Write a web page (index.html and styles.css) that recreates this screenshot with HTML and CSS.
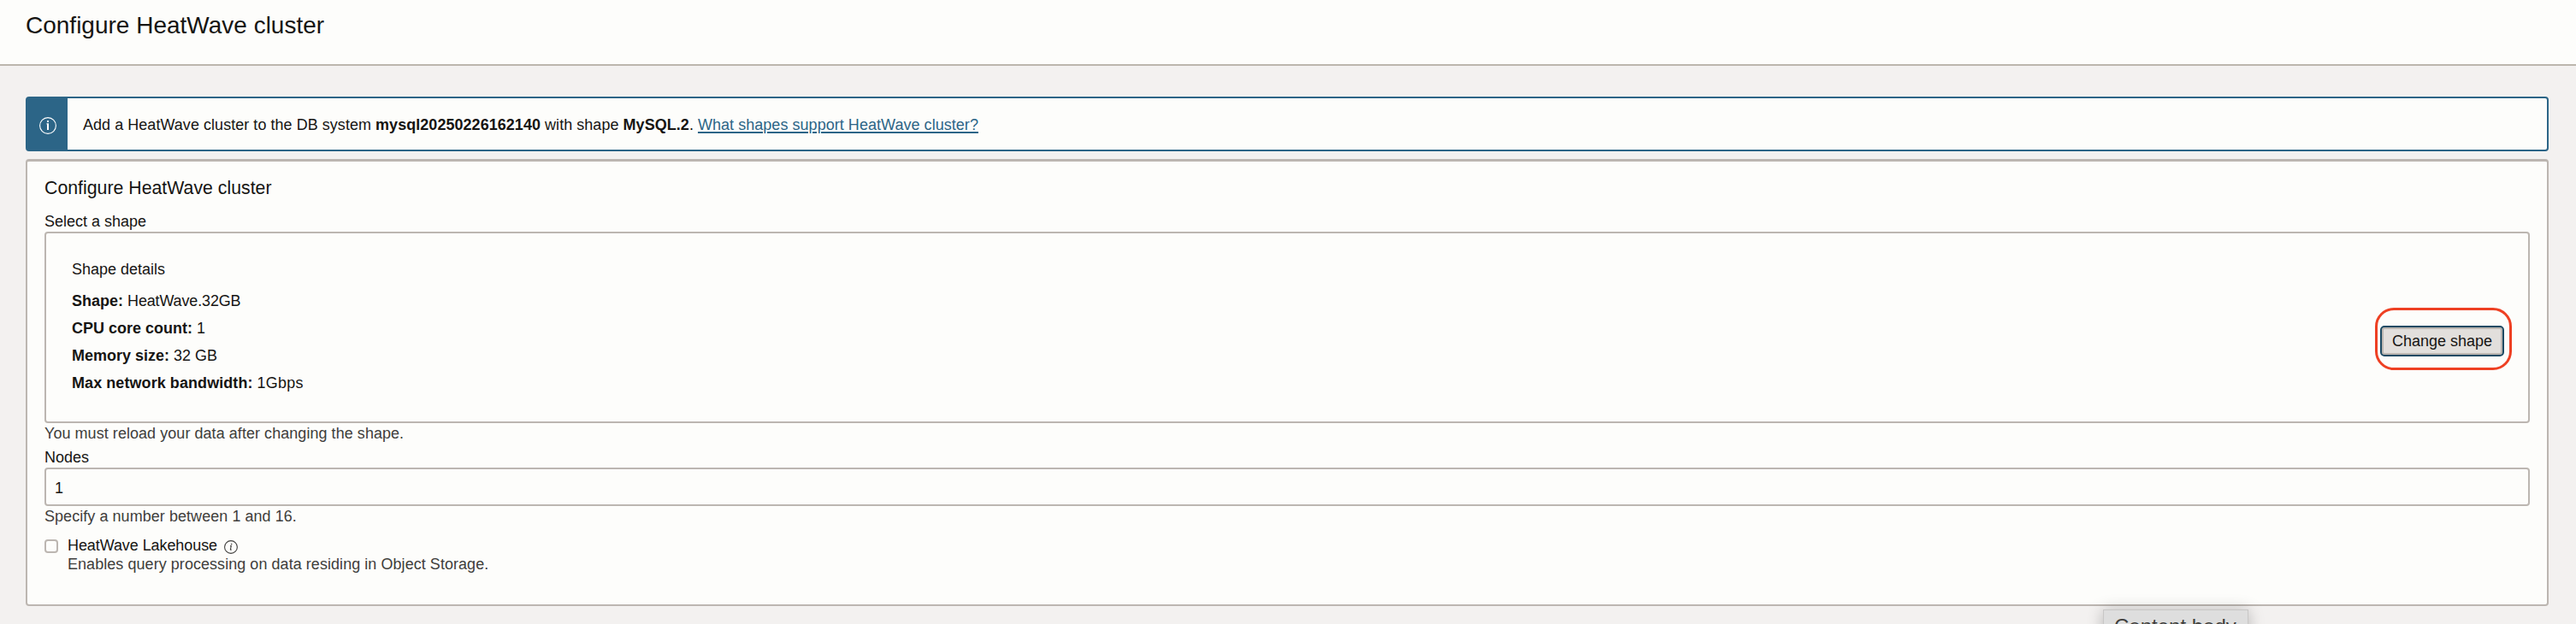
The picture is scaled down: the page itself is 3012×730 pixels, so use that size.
FILE: index.html
```
<!DOCTYPE html>
<html lang="en">
<head>
<meta charset="utf-8">
<title>Configure HeatWave cluster</title>
<link rel="stylesheet" href="styles.css">
</head>
<body>
<header class="header"><h1 class="title">Configure HeatWave cluster</h1></header>
<main class="main">
  <section class="notice">
    <div class="notice-band">
      <svg class="notice-icon" viewBox="0 0 20 20"><circle cx="10" cy="10" r="9.4"/><path d="M9 4H11V6H9ZM8.5 7.3H11V15H9V8.5H8.5Z"/></svg>
    </div>
    <p class="notice-text">Add a HeatWave cluster to the DB system <b>mysql20250226162140</b> with shape <b>MySQL.2</b>. <a class="link" href="#">What shapes support HeatWave cluster?</a></p>
  </section>
  <section class="card">
    <h2 class="card-title">Configure HeatWave cluster</h2>
    <div class="label shape-label">Select a shape</div>
    <div class="shape-box">
      <div class="details">
        <div class="details-title">Shape details</div>
        <div class="row"><b>Shape:</b> <span class="shape-name">HeatWave.32GB</span></div>
        <div class="row"><b>CPU core count:</b> 1</div>
        <div class="row"><b>Memory size:</b> 32 GB</div>
        <div class="row"><b class="bandwidth">Max network bandwidth:</b> <span class="bandwidth-value">1Gbps</span></div>
      </div>
      <div class="highlight"><button class="button">Change shape</button></div>
    </div>
    <div class="hint">You must reload your data after changing the shape.</div>
    <div class="label nodes-label">Nodes</div>
    <div class="input">1</div>
    <div class="hint">Specify a number between 1 and 16.</div>
    <div class="option">
      <div class="checkbox"></div>
      <div>
        <div class="option-name"><span>HeatWave Lakehouse</span><svg class="info" viewBox="0 0 16 16"><circle cx="8" cy="8" r="7.4"/><path d="M7 6.8L8.3 6.6L7.4 10.9Q7.5 11.6 8.6 10.8"/><circle class="dot" cx="8.7" cy="4.6" r=".8"/></svg></div>
        <div class="hint">Enables query processing on data residing in Object Storage.</div>
      </div>
    </div>
  </section>
</main>
<div class="tooltip">Content body</div>
</body>
</html>
```
FILE: styles.css
```
* { box-sizing: border-box; margin: 0; }
body { height: 730px; overflow: hidden; position: relative; background: #f3f1f0; color: #161513; font: 18px/22px "Liberation Sans", Arial, sans-serif; }
.header { height: 77px; padding: 14px 0 0 30px; background: #fdfdfb; border-bottom: 2px solid #bcb6ad; }
.title { font-size: 28px; line-height: 32px; font-weight: 400; }
.main { padding: 36px 32px 0 30px; }
.notice { display: flex; height: 64px; border: 2px solid #2c6587; border-radius: 4px; background: #fdfdfb; }
.notice-band { width: 47px; padding: 22px 0 0 14px; background: #2c6587; }
.notice-icon { display: block; width: 20px; height: 20px; fill: #fff; }
.notice-icon circle { fill: none; stroke: #fff; stroke-width: 1.1; }
.notice-text { padding: 20px 0 0 18px; white-space: nowrap; letter-spacing: .04px; }
.link { color: #2c6587; text-decoration: underline; text-decoration-thickness: 2px; text-underline-offset: 2px; }
.card { height: 523px; margin-top: 9px; padding: 17px 20px 0; border: 2px solid #bcb6b1; border-top-width: 3px; border-radius: 4px; background: #fdfdfb; }
.card-title { font-size: 21.3px; line-height: 28px; font-weight: 400; }
.shape-label { margin-top: 14px; margin-bottom: 1px; }
.shape-box { display: flex; justify-content: space-between; height: 224px; margin-bottom: 1px; padding: 31px 19px 0 30px; border: 2px solid #bcb6b1; border-radius: 4px; }
.details-title { margin-bottom: 10px; }
.row { line-height: 32px; }
.shape-name { letter-spacing: -.15px; }
.bandwidth { letter-spacing: .07px; }
.bandwidth-value { letter-spacing: .2px; }
.highlight { width: 160px; height: 73px; margin-top: 56px; padding: 18px 6px 0 3px; border: 3px solid #ee4023; border-radius: 22px; }
.button { display: block; width: 145px; height: 36px; padding: 0; border: 2px solid #1d4a63; border-radius: 5px; background: #e2dfdc; box-shadow: inset 0 0 0 2px #bcb6b1; color: #161513; font: inherit; }
.hint { color: #3f3e3c; letter-spacing: .05px; }
.nodes-label { margin-top: 6px; margin-bottom: 1px; }
.input { height: 45px; margin-bottom: 1px; padding: 11px 10px; border: 2px solid #bcb6b1; border-radius: 4px; }
.option { display: flex; gap: 11px; margin-top: 12px; }
.checkbox { width: 16px; height: 16px; margin-top: 4px; border: 2px solid #bcb6b1; border-radius: 4px; }
.option-name { display: flex; letter-spacing: -.08px; }
.info { width: 16px; height: 16px; margin: 5px 0 0 8px; fill: none; stroke: #3f3e3c; stroke-width: 1.1; }
.info .dot { fill: #3f3e3c; stroke: none; }
.tooltip { position: absolute; left: 2459px; top: 713px; width: 170px; height: 38px; padding: 5px 0 0 12px; border: 1px solid #c8c7c6; background: #dedede; box-shadow: 0 1px 18px rgba(0,0,0,.25); color: #3f3e3c; font-size: 24px; line-height: 28px; }
```
